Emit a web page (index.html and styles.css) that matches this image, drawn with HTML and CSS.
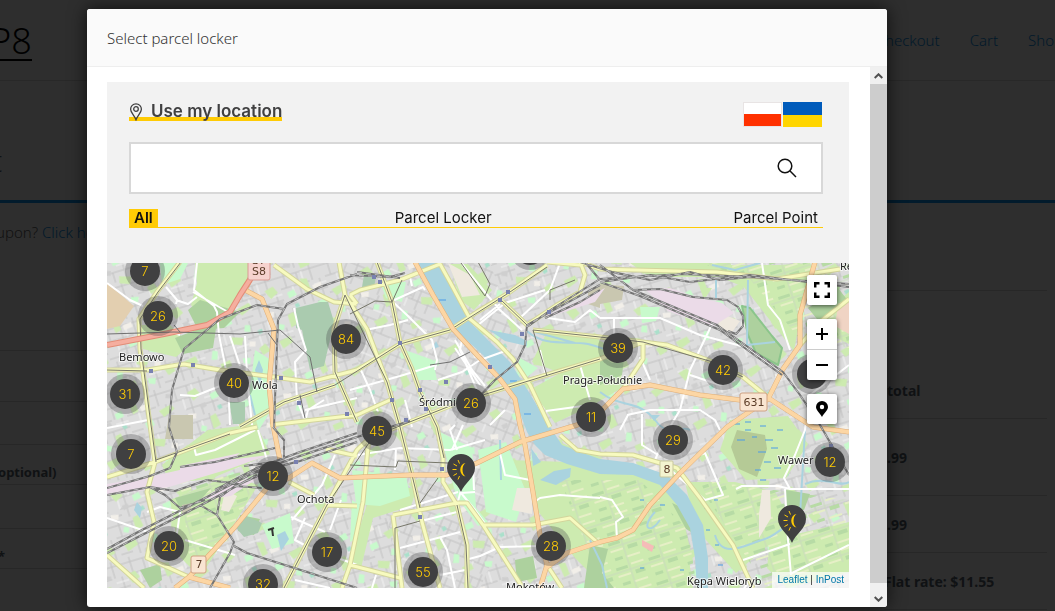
FILE: index.html
```html
<!DOCTYPE html>
<html lang="en">
<head>
<meta charset="utf-8">
<title>Select parcel locker</title>
<link rel="stylesheet" href="styles.css">
</head>
<body>
<div class="shop">
  <header class="shop-header">
    <a class="shop-logo" href="#">P8</a>
    <nav class="shop-nav"><a href="#">Checkout</a><a href="#">Cart</a><a href="#">Shop</a></nav>
  </header>
  <div class="shop-title">t</div>
  <p class="shop-notice">upon? <a href="#">Click here</a></p>
  <div class="shop-columns">
    <div class="shop-form">
      <div class="line line-first"></div>
      <div class="line line-a"></div>
      <div class="line line-b"></div>
      <div class="line line-c">optional)</div>
      <div class="line line-d"></div>
      <div class="line line-c">*</div>
    </div>
    <div class="shop-order">
      <div class="order-head"></div>
      <div class="order-row order-sub">total</div>
      <div class="order-row order-item">.99</div>
      <div class="order-row order-sum">.99</div>
      <div class="order-row order-sum order-ship">Flat rate: $11.55</div>
    </div>
  </div>
</div>

<div class="overlay">
<section class="modal" role="dialog" aria-labelledby="modal-title">
  <header class="modal-header"><h1 id="modal-title">Select parcel locker</h1></header>
  <div class="modal-body">
    <div class="widget">
      <div class="search-panel">
        <div class="panel-top">
          <button class="locate" type="button">
            <svg width="14" height="18" viewBox="0 0 14 18" fill="none" stroke="#404041" stroke-width="1.3"><path d="M7 16.8C5.4 12.6 1.6 9.6 1.6 6.2a5.4 5.4 0 0 1 10.8 0C12.400 9.600 8.600 12.600 7 16.800z"/><circle cx="7" cy="6" r="2.300"/></svg>
            <span>Use my location</span>
          </button>
          <div class="flags">
            <button class="flag flag-pl" type="button" aria-label="Polski"></button>
            <button class="flag flag-ua" type="button" aria-label="Українська"></button>
          </div>
        </div>
        <form class="search">
          <input type="text" aria-label="Search">
          <button type="button" aria-label="Find">
            <svg width="20" height="20" viewBox="0 0 20 20" fill="none" stroke="#111" stroke-width="1.500"><circle cx="8" cy="8" r="6.800"/><path d="M12.800 12.800L19 19"/></svg>
          </button>
        </form>
        <nav class="tabs">
          <button class="tab active" type="button">All</button>
          <button class="tab" type="button">Parcel Locker</button>
          <button class="tab" type="button">Parcel Point</button>
        </nav>
      </div>

      <div class="map">
        <svg class="tiles" viewBox="107 263 742 325" preserveAspectRatio="xMinYMin slice">
          <defs>
            <pattern id="blocks" width="46" height="38" patternUnits="userSpaceOnUse" patternTransform="rotate(-17)">
              <path d="M0 5H46M0 17H30M12 28H46M6 0V17M19 5V38M33 0V17M40 17V38M28 28V38M0 34H12" fill="none" stroke="#c2c2c2"/>
              <path d="M24 5V17M12 17V28M33 22H46" fill="none" stroke="#f3f3f3"/>
            </pattern>
            <pattern id="blocks2" width="40" height="44" patternUnits="userSpaceOnUse" patternTransform="rotate(22)">
              <path d="M0 6H40M0 15H22M9 24H40M0 35H40M5 0V24M14 6V35M22 0V15M31 6V44M38 24V35M20 24V44" fill="none" stroke="#c2c2c2"/>
              <path d="M22 15H40M9 35V44" fill="none" stroke="#f3f3f3"/>
            </pattern>
            <pattern id="greens" width="97" height="83" patternUnits="userSpaceOnUse" patternTransform="rotate(-12)">
              <path fill="#cdebb0" d="M4 8l9-3 4 7-8 5zM41 3l7 1 2 12-6 2zM70 20l13-4 3 5-12 6zM22 36l6-2 3 12-8 3zM59 46l12 3-3 7-10-3zM8 60l12-3 2 6-11 5zM84 63l7-4 4 8-8 3zM43 70l10-2 1 6-10 2z"/>
              <path fill="#c8facc" d="M26 14l7-2 2 6-8 2zM54 29l8-2 1 6-8 2zM38 55l5 2-2 8-6-1zM75 37l5 1-1 7-6-2zM12 43l5 2-2 5-5-2zM66 69l8 1-2 6-6-2z"/>
              <path fill="#aae0cb" d="M31 27l4-1 1 4-4 1zM86 45l5-1v4l-4 1z"/>
              <path fill="#f2efe9" d="M52 12l9-2 1 5-9 2zM1 29l8 1-1 5-7-1zM76 54l6 1-1 5-6-1z"/>
              <path fill="#cfcfcf" d="M14 22l6-1 1 4-6 2zM46 38l6 1-1 5-6-2zM28 68l7 1-1 4-7-1zM80 5l6 1-1 4-6-1z"/>
            </pattern>
            <pattern id="allot" width="34" height="26" patternUnits="userSpaceOnUse" patternTransform="rotate(-18)">
              <path fill="#b7dba5" d="M2 3h12v3H2zM20 10h10v4H20zM4 19h8v3H4z"/>
              <path fill="#e6efc6" d="M18 2h13v2H18zM2 11h13v2H2zM16 20h14v2H16z"/>
              <path d="M0 8H34M16 0V26" stroke="#c9d9bd"/>
            </pattern>
            <path id="yellow-roads" d="M180 262L157 292 139 319 140 349 150 425 155 462 147 492 154 522 147 558 189 577M107 370L147 370 184 364 220 370 274 377 310 382 357 370 400 344 450 330 477 312 507 294 547 265M274 265L307 289 334 302 357 304M339 262L345 295 334 329 335 372 357 422M240 427L284 402 335 385M270 425L357 415 390 400M377 262L392 302 400 342 412 369 420 392 437 427 443 458 443 482 457 505 467 545 467 588M350 295L360 290 400 280 440 264 450 282 470 319 497 342 513 359 530 385 550 427M345 295L367 329 387 382 400 427 412 475 422 522 440 588M377 435L397 427 460 402 533 379 600 359 643 342M500 299L527 325 557 305 580 292 585 275 580 262M533 330L600 337 643 342 667 345 713 362 743 377 770 399M643 342L643 359 623 389M600 269L717 272 777 279 840 269M849 299L820 322 800 345M107 477L155 462 230 433 257 427M107 555L144 588M377 431L357 450 327 505 284 588M289 482L314 495M370 425L363 502 350 565 342 588M350 565L400 578M393 515L457 503 467 503 483 525 523 588M483 525L533 525 570 518 597 542M393 515L402 588M560 435L577 450 600 454 633 455 677 468 700 498 733 545 753 588M327 505L357 506M547 565L562 588M326 449L357 456M357 304L350 295M580 262L600 269M547 262L580 265"/>
            <path id="orange-roads" d="M415 262L433 295 453 329 477 355 500 379 515 399 520 425 525 445 533 492 540 535 547 565 540 588M250 280L245 290 262 299 274 329 269 385 273 425 280 460M175 588L189 577 234 528 267 488 289 478 312 463 340 478 410 475 447 475 477 463 520 442 577 425 600 412 623 389 650 385 700 395 740 400 770 399 813 427 849 432M189 577L230 588M815 262L800 315 800 345 783 369 768 399 727 427 680 473 650 505 633 530 617 538 600 542 567 553 547 567"/>
            <path id="motorway" d="M107 345L164 334 207 325 230 312 240 295 251 278"/>
            <path id="rails" d="M357 274L320 287 287 304 278 320 277 345 274 427M357 272L400 278M350 275L390 277 405 273M284 309L257 305 220 319 184 349 172 390 169 427 177 452 170 468 150 476 107 488M107 495L150 487 175 491 207 480 240 484 275 468M200 505L217 515 234 542 230 553 210 588M217 515L220 497 235 486 262 488M234 546L247 553 307 572 357 588M150 487L165 495 180 508 205 500M107 549L140 531 207 497 257 471 300 456 357 437 377 431M180 467L215 462 275 448M244 466L275 462M273 427L284 440 284 458M107 553L140 536 207 502 257 475M250 474L300 461 357 442M215 490L257 468 300 452 357 433M377 431L410 421M478 398L495 380 517 362 525 345 527 325 550 312 600 285M527 327L552 309 600 279 633 277 683 274 750 277 849 284M545 318L580 302 600 290M600 282L650 275 690 282 750 275 849 287M600 265L633 290 717 325 783 372 800 395 820 425 849 475M600 282L640 296 720 330 782 375M633 290L660 289 693 297 727 300 738 307 743 316 743 326 736 334 728 331M585 262L600 280M580 262L612 272 650 280 690 272 720 280 750 277"/>
          </defs>
          <path fill="#ddd" d="M107 263h742v325H107z"/>
          <path fill="url(#blocks)" d="M107 263h742v325H107z"/>
          <path fill="#ddd" d="M340 263h150l60 165-70 160H400z"/>
          <path fill="url(#blocks2)" d="M340 263h150l60 165-70 160H400z"/>
          <path fill="url(#greens)" d="M107 263h742v325H107z"/>

          <g fill="#cdebb0">
            <path d="M195 263h62l-8 20-18 24-26 12-14-14 6-22zM140 325l30 0 20 20-14 12-33-8zM208 430l48-6 14 30-60 25-40 4-8-18z"/>
            <path d="M170 500l60-25 28 10-32 52-26 40-20-20zM372 488l45 0-6 18-38 12-12 50-11-8z"/>
            <path d="M548 330l50 10 26 12-24 15-32 9-36-14zM570 368l54-15-4 36-27 16-38 18-24-34z"/>
            <path d="M553 440l50 18-18 4-24-12zM567 462l70 8 36 26 12 34 8 58h-88l-30-30-38-48-28-50z"/>
            <path d="M700 288h12l-8 12zM690 265h90l30-2 5 10-16 50-5 28-50-64zM730 420l58-4 20 28-22 34-40 2-26-30z"/>
            <path d="M685 482l50 0 40 10 26 45-35 10-30 26-40-44zM770 540l79-18v50l-62 16-20-20zM450 264l18 0 24 26-18 20-14-10z"/>
            <path d="M630 263h100l10 14H650zM815 320l34-28v52l-24-12zM620 475l45 8 14 18 14 60-30 27-20-50z"/>
          </g>
          <path fill="url(#allot)" d="M700 263h149v85l-50-10-50-60zM560 480l80 0 48 50 9 58h-94zM700 480l149 20v60l-82 28-60-90zM180 480l80-10-30 70-40 20z"/>
          <g fill="#c8facc">
            <path d="M160 263h28l-8 16-18 6zM255 350l16 10 0 50-12 20-10-34zM440 432l32 16 4 60 12 14-10 4-22-30z"/>
            <path d="M478 450l28-8 20 50-10 30-30-10zM352 470l54 6 4 20-30 10-24-2zM380 282l26 0-4 20-16-4zM352 500l12 8-6 30-8 4z"/>
            <path d="M262 525l28-12 4 30-22 6zM520 358l18 10-12 10-10-8zM405 350l28 10 4 20-20 0zM640 307h20l-4 14-14 2z"/>
          </g>
          <g fill="#add19e">
            <path d="M188 310l12-10 40 12-16 16-26 2zM175 338l42-16-4 26-30 6zM808 308l30-20 11 14-28 22zM600 355l12 8 12-4-2 16-22 10zM786 490l24 4-6 16-18 0z"/>
            <path d="M175 498l36-10-16 18-14 4zM240 515l20 4-6 16-16-4zM140 570l20-6 2 16-12 8zM590 545l18 4-6 24 12 15h-30zM515 560l18-4 4 22-20 4z"/>
            <path d="M672 503l18 8 6 24-10-6z"/>
            <path stroke="#8bc58b" stroke-width="2" d="M742 306l8 2 22 28 10 12-4 17-22-12-8-18z"/>
          </g>
          <path fill="#aacbaf" d="M296 308l24-6 8 0 6 20-10 44-14 4-8-40-6-2zM229 402h16v22h-12zM244 515l18 8-4 10-14 4-10-12zM364 275l12 2-2 10-12 0z"/>
          <path fill="#c9c7b0" d="M169 415l24 0 0 24-28 0zM600 284l24 2-2 14-22 4zM588 290l12-6v24l-12-4zM182 505l10-2-2 10-8 2z"/>
          <path fill="#b5ca96" d="M737 430l28 5 2 14-10 28-18-8-8-22z"/>
          <path fill="#efe9df" d="M517 488l15 0 0 26-20-4zM762 490l8 0 1 28-12 20 0-24zM448 263l22 12 10 20-18 2zM225 490l12 6-8 16-8-2zM720 313l20 8-10 14-12-8z"/>
          <path fill="#ebdbe8" d="M646 290l24-2 26 9 26 6 12 10-22 14-44-16zM107 484l42-7 70-16 50-6-40 14-60 18-62 8zM180 466l60-13-10 8-50 12zM545 316l40-18 20-10-10 14-44 14zM199 500l28-16 34-8-30 20z"/>
          <path fill="#e3cfb0" d="M107 283l27 23-14 20-13 3z"/>
          <path fill="#f0d4c4" d="M838 304l11-6v36l-14-8z"/>
          <path fill="#f5bcb8" d="M642 540l12 6-2 6-10-6z"/>

          <path class="river" d="M418 262L427 289L450 325L483 355L497 372L517 405L527 432L535 445L545 455L567 464L600 474L633 475L660 485L677 505L690 528L695 558L697 589H708L708 558L703 525L687 495L667 475L633 463L600 459L583 453L562 445L550 427L527 389L510 362L497 349L473 325L465 312L447 279L438 262zM531 448l10 14-8 4zM540 480l14-9 17-3-1 9-14 8zM489 330l26 5 12 6v5l-22-5zM259 360l4 10-3 16-5-16zM277 535l8-4 4 8-8 12zM137 502l5 6-2 10-6-8zM650 415h10l-6 6zM432 349l4-8 3 6z"/>
          <path class="stream" d="M527 331C545 348 570 340 588 344S610 354 624 352M535 332L575 343M748 280L747 345M747 345L775 342M600 392C620 408 640 400 655 420S680 424 690 430M715 535C722 560 745 545 762 540S778 528 790 526M805 430L800 515M805 484C825 475 840 488 849 482M590 540L602 565L607 588M500 440L501 480M712 265L735 270L760 263M660 520C650 535 640 528 655 512M250 395L255 415M716 278V300"/>
          <path class="marsh" d="M733 424h7M745 430h6M737 440h8M752 437h5M760 426h6M765 440h8M758 452h8M771 448h7M764 462h7M755 470h6M777 430h6M774 468h7M760 480h6M745 422h6M640 500h4M660 505h5M704 508h4M706 530h4M715 545h4M718 565h5M700 580h4M680 570h4M437 300h9M510 381h7M524 414h7M714 500h4M640 568h4"/>

          <path class="minor" d="M107 283L130 300 143 306M166 287L177 300 176 304M197 263L194 290 214 306 217 312 219 335M193 292L228 312M219 335L228 380 230 425M230 336L240 366M245 336L247 375 252 425M294 308L298 326 306 350 295 362 297 400 305 420M305 410L357 398M306 418L308 410 324 400M180 395L195 396 220 386M107 428L148 420M176 300L188 304 197 297M169 331L180 335"/>
          <path class="minor" d="M194 447L196 455 215 450 255 430M258 430L267 460M107 518L148 532M147 512L160 507 180 512 176 540M185 540L235 555M335 455L322 485 292 520M291 517L325 532M305 518L295 540 310 548 357 565M341 500L330 530M358 455L400 448 450 450 485 440M396 448L395 470M295 580L330 588"/>
          <path class="minor" d="M393 302L408 316 432 340 437 360 435 370M365 330L390 325 408 320M462 264L488 296 500 310 522 330M350 390L400 376 436 365M360 368L370 390 378 412M405 400L412 427M508 350L480 360 462 372 438 380M455 340L472 370 485 386M455 348L480 385M462 340L460 350 479 395M478 325L505 303 545 290M560 263L550 290 520 318M390 302L423 287 425 290M410 277L412 286M480 320L500 304"/>
          <path class="minor" d="M548 318L575 322 590 310 600 318M546 411L590 405M580 365L590 400M540 350L546 376M505 410L490 425M600 318L660 318 700 335 745 347 780 370M614 318V342M713 322L690 370 680 410 668 430 655 460M640 357L650 380M690 375L720 385 735 380M627 415L650 410 700 410 715 420 720 430M642 414V445L658 455M628 415L620 430M762 263L768 305 780 320 790 350M810 395L849 365M600 497L612 500 623 517 616 522 617 538M700 455L705 453 723 495 705 500 665 465M736 489L742 486H778L790 489H849M790 489L784 478 795 455 805 430 806 420M785 489L788 540 791 575M743 560L790 544M790 574L849 545M743 590L750 580"/>
          <path class="minor" d="M461 490L457 505M461 493L475 492M461 493L475 510 486 525M473 465L474 490M400 510L458 492M417 522L457 512M400 548L460 532M440 537L447 550 455 588M440 575L465 570M469 559L480 556 500 547 540 546M500 453L505 475 530 480M533 503L540 498 560 495 600 498M455 425L450 430 457 450M463 425L452 450M372 588L376 575"/>

          <use class="yellow-case" href="#yellow-roads"/>
          <use class="yellow" href="#yellow-roads"/>
          <path class="tram" d="M181 262L158 292 140 319 141 349 151 425 156 462M107 370L147 371M240 427L284 402 335 385 400 344 450 330 507 294 547 267M345 295L334 329 335 372 357 422M377 262L392 302 400 342 412 369 420 392 437 427 444 458M345 295L387 382 400 427 412 475 420 508M156 460L230 434M377 435L460 402 600 359M500 299L527 325M533 330L600 337 643 342 713 362 743 377M284 588L327 505 377 431M350 465L396 467 398 461 448 463M438 478L420 503M395 588V528L420 521M468 588L466 545 457 505M533 330L547 376M350 314L375 301 392 302 402 280M461 263L485 296 490 284 478 262M550 300V290L575 280"/>

          <use class="orange-case" href="#orange-roads"/>
          <use class="orange" href="#orange-roads"/>
          <use class="motor-case" href="#motorway"/>
          <use class="motor" href="#motorway"/>
          <use class="rail" href="#rails"/>
          <use class="rail-dash" href="#rails"/>
          <path class="rail-thin" d="M107 334L174 332 240 334 280 330 310 357 317 392M174 325L180 332M268 333L277 345M300 395L305 418M430 365L450 362 470 352"/>
          <path class="stations" d="M149 369h4v4h-4zM191 363h4v4h-4zM279 376h4v4h-4zM297 401h4v4h-4zM345 412h4v4h-4zM372 275h4v4h-4zM378 280h4v4h-4zM398 341h4v4h-4zM418 388h4v4h-4zM390 398h4v4h-4zM424 407h4v4h-4zM404 418h4v4h-4zM444 380h4v4h-4zM488 365h4v4h-4zM506 290h4v4h-4zM498 298h4v4h-4zM547 310h4v4h-4zM520 332h4v4h-4zM294 460h4v4h-4zM440 467h4v4h-4zM418 515h4v4h-4zM829 444h4v4h-4z"/>
          <path d="M268 530l6-2M272 528l1 8" stroke="#333" stroke-width="2"/>

          <g class="shields">
            <rect x="248" y="255" width="22" height="25" rx="2" fill="#f6d3ce" stroke="#d99b95"/>
            <rect x="740" y="393" width="27" height="18" rx="2" fill="#f9e5d2" stroke="#d0a283"/>
            <rect x="191" y="556" width="15" height="17" rx="2" fill="#f9e5d2" stroke="#d0a283"/>
            <rect x="660" y="461" width="13" height="16" rx="1" fill="#f4f4cf" stroke="#c8c89b"/>
            <text x="259" y="264">S7</text><text x="259" y="275">S8</text>
            <text x="754" y="406">631</text><text x="199" y="568">7</text><text x="667" y="473">8</text>
          </g>
          <g class="places">
            <text x="119" y="361">Bemowo</text>
            <text x="252" y="389">Wola</text>
            <text x="419" y="406">Śródmieście</text>
            <text x="563" y="384">Praga-Południe</text>
            <text x="297" y="503">Ochota</text>
            <text x="506" y="591">Mokotów</text>
            <text x="687" y="585">Kępa Wieloryb</text>
            <text x="778" y="464">Wawer</text>
            <text x="840" y="270">Re</text>
          </g>
        </svg>

        <button class="cluster" type="button" style="left:38px;top:8px">7</button>
        <button class="cluster" type="button" style="left:51px;top:53px">26</button>
        <button class="cluster" type="button" style="left:239px;top:76px">84</button>
        <button class="cluster" type="button" style="left:127px;top:120px">40</button>
        <button class="cluster" type="button" style="left:18px;top:131px">31</button>
        <button class="cluster" type="button" style="left:364px;top:140px">26</button>
        <button class="cluster" type="button" style="left:270px;top:168px">45</button>
        <button class="cluster" type="button" style="left:511px;top:85px">39</button>
        <button class="cluster" type="button" style="left:616px;top:107px">42</button>
        <button class="cluster" type="button" style="left:484px;top:154px">11</button>
        <button class="cluster" type="button" style="left:566px;top:177px">29</button>
        <button class="cluster" type="button" style="left:723px;top:199px">12</button>
        <button class="cluster" type="button" style="left:24px;top:191px">7</button>
        <button class="cluster" type="button" style="left:166px;top:213px">12</button>
        <button class="cluster" type="button" style="left:62px;top:283px">20</button>
        <button class="cluster" type="button" style="left:220px;top:289px">17</button>
        <button class="cluster" type="button" style="left:156px;top:321px">32</button>
        <button class="cluster" type="button" style="left:316px;top:309px">55</button>
        <button class="cluster" type="button" style="left:444px;top:283px">28</button>
        <button class="cluster" type="button" style="left:423px;top:-13px" aria-label="Cluster"></button>
        <button class="cluster" type="button" style="left:705px;top:111px" aria-label="Cluster"></button>

        <button class="pin" type="button" aria-label="Parcel locker" style="left:354px;top:191px">
          <svg width="28" height="38" viewBox="0 0 28 38"><g id="pin-shape"><path fill="#404041" d="M14 38C10.500 29 0 23.500 0 14a14 14 0 0 1 28 0c0 9.500-10.500 15-14 24z"/><path fill="#ffcb05" d="M18.500 9c-7 1-7 12.500 0 13.500-4-2.500-4-11 0-13.500z"/><path stroke="#ffcb05" d="M5.500 15.500h4M6.500 10l3.500 2M6.500 21.500l3.500-2M11 6l1.500 3.500M11 25.500l1.500-3.500"/></g></svg>
        </button>
        <button class="pin" type="button" aria-label="Parcel locker" style="left:685px;top:242px">
          <svg width="28" height="38" viewBox="0 0 28 38"><use href="#pin-shape"/></svg>
        </button>

        <div class="controls">
          <div class="bar"><button type="button" aria-label="Full screen"><svg width="16" height="16" viewBox="0 0 16 16" fill="none" stroke="#000" stroke-width="2.500"><path d="M1.200 5.500V1.200h4.300M10.500 1.200h4.300v4.300M14.800 10.500v4.300h-4.300M5.500 14.800H1.200v-4.300"/></svg></button></div>
          <div class="bar">
            <button type="button" aria-label="Zoom in"><svg width="12" height="12" viewBox="0 0 12 12" stroke="#000" stroke-width="2"><path d="M0 6h12M6 0v12"/></svg></button>
            <button type="button" aria-label="Zoom out"><svg width="12" height="12" viewBox="0 0 12 12" stroke="#000" stroke-width="2"><path d="M0 6h12"/></svg></button>
          </div>
          <div class="bar"><button type="button" aria-label="Show my location"><svg width="12" height="16" viewBox="0 0 12 16"><path fill-rule="evenodd" d="M6 16C4.500 12.500 0 9.500 0 6a6 6 0 0 1 12 0c0 3.500-4.500 6.500-6 10zM6 8.200a2.200 2.200 0 1 0 0-4.400 2.200 2.200 0 0 0 0 4.400z"/></svg></button></div>
        </div>
        <div class="credit"><a href="#">Leaflet</a> | <a href="#">InPost</a></div>
      </div>
    </div>
    <div class="scrollbar" aria-hidden="true">
      <div class="arrow"><svg width="9" height="6" viewBox="0 0 9 6" fill="none" stroke="#505050" stroke-width="2"><path d="M.7 5L4.500 1.300 8.300 5"/></svg></div>
      <div class="thumb"></div>
      <div class="arrow arrow-down"><svg width="9" height="6" viewBox="0 0 9 6" fill="none" stroke="#505050" stroke-width="2"><path d="M.7 1L4.500 4.700 8.300 1"/></svg></div>
    </div>
  </div>
</section>
</div>
</body>
</html>
```

FILE: styles.css
```css
* { box-sizing: border-box; }
body {
  margin: 0;
  height: 100vh;
  overflow: hidden;
  background: #2e2e2e;
  color: #101214;
  font-family: "Noto Sans", "Open Sans", sans-serif;
  font-size: 14px;
}
button { margin: 0; padding: 0; border: 0; background: none; font: inherit; color: inherit; cursor: pointer; }
svg { display: block; }

/* Dimmed shop page */
.shop a { color: #02192a; text-decoration: none; }
.shop-header {
  display: flex;
  justify-content: space-between;
  align-items: center;
  height: 81px;
  border-bottom: 1px solid #282828;
}
.shop .shop-logo { margin-left: -10px; padding-top: 4px; font-size: 36px; font-weight: 300; line-height: 36px; color: #000; border-bottom: 2px solid #000; }
.shop-nav { display: flex; gap: 30px; margin-right: -8px; font-size: 15px; font-weight: 300; }
.shop-title { height: 122px; padding-top: 60px; margin-left: -8px; font-size: 30px; line-height: 40px; font-weight: 300; border-bottom: 3px solid #021b2c; }
.shop-notice { margin: 0 0 0 -4px; height: 58px; font-size: 15px; line-height: 58px; font-weight: 300; color: #111; }
.shop-columns { display: flex; justify-content: space-between; font-weight: 700; }
.shop-form { width: 100px; }
.line { border-bottom: 1px solid #272727; font-size: 13px; text-indent: -2px; }
.line-first { height: 90px; }
.line-a { height: 51px; }
.line-b { height: 43px; }
.line-c { height: 40px; line-height: 54px; }
.line-d { height: 44px; }
.shop-order { width: 171px; margin-top: 29px; }
.order-head { width: 163px; height: 1px; background: #272727; }
.order-row { width: 163px; padding-left: 3px; border-bottom: 1px solid #272727; }
.order-sub { height: 128px; padding-top: 90px; }
.order-item { height: 77px; line-height: 77px; }
.order-sum { height: 57px; line-height: 57px; }
.order-ship { padding-left: 0; }

/* Modal */
.overlay { position: fixed; inset: 0; padding: 9px 16px 4px 87px; }
.modal {
  max-width: 800px;
  background: #fff;
  border-radius: 3px;
  overflow: hidden;
  box-shadow: 0 0 18px rgba(0, 0, 0, .7);
}
.modal-header { padding: 18px 20px 17px; background: #fafafa; border-bottom: 1px solid #eee; }
.modal-header h1 { margin: 0; font-size: 15px; line-height: 22px; font-weight: 300; color: #333; }
.modal-body { display: flex; }
.widget { flex: 1; padding: 15px 21px 19px 20px; font-family: Inter, sans-serif; }

.search-panel { padding: 20px 26px 35px 22px; background: #f2f2f2; }
.panel-top { display: flex; justify-content: space-between; }
.locate {
  display: flex;
  align-items: center;
  gap: 8px;
  height: 19px;
  color: #404041;
  font-size: 17px;
  font-weight: 600;
  line-height: 18px;
  background: linear-gradient(#ffcb05, #ffcb05) 0 100% / 100% 4px no-repeat;
}
.locate span { padding-bottom: 2px; }
.flags { display: flex; gap: 1px; margin: 0 1px 15px 0; }
.flag { width: 39px; height: 25px; }
.flag-pl { border: 1px solid #e8e4e4; background: linear-gradient(#fff 50%, #ff3100 50%); }
.flag-ua { background: linear-gradient(#005bbb 52%, #ffd500 52%); }
.search { display: flex; height: 52px; background: #fff; border: 2px solid #d8d8d8; }
.search input { flex: 1; min-width: 0; border: 0; outline: 0; padding: 0 16px; background: none; font: inherit; }
.search button { display: grid; place-items: center; width: 69px; }
.tabs { display: flex; justify-content: space-between; margin-top: 15px; border-bottom: 1px solid #ffcb05; }
.tab { padding: 0 5px; font-size: 15px; line-height: 18px; color: #111; }
.tab.active { background: #ffcb05; font-weight: 600; }

/* Map */
.map { position: relative; height: 325px; overflow: hidden; }
.tiles { width: 100%; height: 100%; stroke-linejoin: round; }
.river { fill: #aad3df; }
.stream { fill: none; stroke: #aad3df; stroke-width: 2; }
.marsh { stroke: #4a9be8; }
.minor { fill: none; stroke: #fff; stroke-width: 2; }
.yellow-case { fill: none; stroke: #d3d59c; stroke-width: 5; }
.yellow { fill: none; stroke: #f7fabf; stroke-width: 3; }
.tram { fill: none; stroke: #77776a; }
.orange-case { fill: none; stroke: #dfae79; stroke-width: 5; }
.orange { fill: none; stroke: #fcd6a4; stroke-width: 4; }
.motor-case { fill: none; stroke: #e28c77; stroke-width: 6; }
.motor { fill: none; stroke: #f5ae9f; stroke-width: 4; }
.rail { fill: none; stroke: #747474; stroke-width: 2; }
.rail-dash { fill: none; stroke: #bbb; stroke-width: 1; stroke-dasharray: 5 4; }
.rail-thin { fill: none; stroke: #707070; }
.stations { fill: #7981b0; }
.shields text { font: 11px "DejaVu Sans", sans-serif; fill: #5b3c28; text-anchor: middle; }
.places text { font: 11px "Noto Sans", sans-serif; fill: #222; stroke: #fff; stroke-width: 2px; stroke-opacity: .7; paint-order: stroke; }

.cluster {
  position: absolute;
  width: 30px;
  height: 30px;
  margin: -15px 0 0 -15px;
  border-radius: 50%;
  background: #404041;
  box-shadow: 0 0 0 5px rgba(64, 64, 65, .3);
  color: #ffcb05;
  font-size: 13px;
  font-weight: 300;
}
.pin { position: absolute; width: 28px; margin-left: -14px; }
.controls { position: absolute; top: 12px; right: 12px; display: grid; gap: 14px; }
.bar { width: 30px; background: #fff; border-radius: 2px; box-shadow: 0 1px 5px rgba(0, 0, 0, .65); }
.bar button { display: grid; place-items: center; width: 30px; height: 30px; }
.bar button + button { height: 31px; border-top: 1px solid #ccc; }
.credit {
  position: absolute;
  right: 0;
  bottom: 0;
  padding: 0 5px;
  background: rgba(255, 255, 255, .7);
  color: #333;
  font: 10px/16px "Liberation Sans", sans-serif;
}
.credit a { color: #0078a8; text-decoration: none; }

.scrollbar { display: flex; flex-direction: column; width: 17px; background: #f0f0f0; }
.arrow { display: grid; place-items: center; height: 17px; }
.arrow-down { height: 24px; padding-top: 8px; }
.thumb { flex: 1; background: #cdcdcd; }
```
